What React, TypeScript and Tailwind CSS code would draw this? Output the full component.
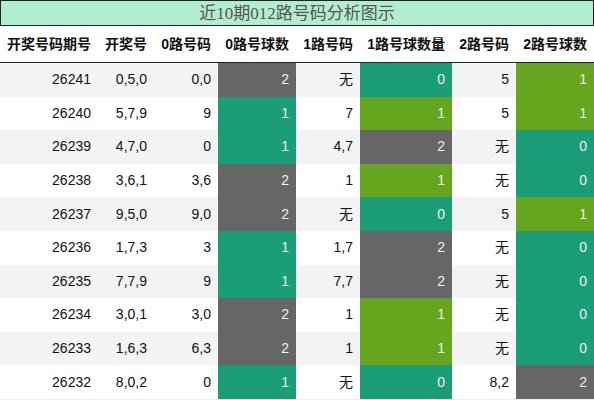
const TEAL = 'bg-[#1b9e77]';
const OLIVE = 'bg-[#66a61e]';
const GREY = 'bg-[#666666]';

type Row = {
	id: string;
	nums: string;
	r0: string;
	c0: [string, string];
	r1: string;
	c1: [string, string];
	r2: string;
	c2: [string, string];
};

// recent 10 draws, 0/1/2 route analysis
const rows: Row[] = [
	{ id: '26241', nums: '0,5,0', r0: '0,0', c0: ['2', GREY], r1: '无', c1: ['0', TEAL], r2: '5', c2: ['1', OLIVE] },
	{ id: '26240', nums: '5,7,9', r0: '9', c0: ['1', TEAL], r1: '7', c1: ['1', OLIVE], r2: '5', c2: ['1', OLIVE] },
	{ id: '26239', nums: '4,7,0', r0: '0', c0: ['1', TEAL], r1: '4,7', c1: ['2', GREY], r2: '无', c2: ['0', TEAL] },
	{ id: '26238', nums: '3,6,1', r0: '3,6', c0: ['2', GREY], r1: '1', c1: ['1', OLIVE], r2: '无', c2: ['0', TEAL] },
	{ id: '26237', nums: '9,5,0', r0: '9,0', c0: ['2', GREY], r1: '无', c1: ['0', TEAL], r2: '5', c2: ['1', OLIVE] },
	{ id: '26236', nums: '1,7,3', r0: '3', c0: ['1', TEAL], r1: '1,7', c1: ['2', GREY], r2: '无', c2: ['0', TEAL] },
	{ id: '26235', nums: '7,7,9', r0: '9', c0: ['1', TEAL], r1: '7,7', c1: ['2', GREY], r2: '无', c2: ['0', TEAL] },
	{ id: '26234', nums: '3,0,1', r0: '3,0', c0: ['2', GREY], r1: '1', c1: ['1', OLIVE], r2: '无', c2: ['0', TEAL] },
	{ id: '26233', nums: '1,6,3', r0: '6,3', c0: ['2', GREY], r1: '1', c1: ['1', OLIVE], r2: '无', c2: ['0', TEAL] },
	{ id: '26232', nums: '8,0,2', r0: '0', c0: ['1', TEAL], r1: '无', c1: ['0', TEAL], r2: '8,2', c2: ['2', GREY] },
];

const widths = ['w-[98px]', 'w-[56px]', 'w-[64px]', 'w-[78px]', 'w-[64px]', 'w-[92px]', 'w-[64px]', 'w-[78px]'];
const heads = ['开奖号码期号', '开奖号', '0路号码', '0路号球数', '1路号码', '1路号球数量', '2路号码', '2路号球数'];

const Plain = ({ w, text }: { w: string; text: string }) => (
	<div className={`${w} shrink-0 flex items-center justify-end px-[7px]`}>{text}</div>
);

const Count = ({ w, cell }: { w: string; cell: [string, string] }) => (
	<div className={`${w} ${cell[1]} shrink-0 flex items-center justify-end px-[7px] text-[#eeeeee]`}>{cell[0]}</div>
);

export default function App() {
	return (
		<div className="w-[594px] h-[400px] overflow-hidden bg-white text-[#111] font-['Liberation_Sans','Noto_Sans_CJK_SC',sans-serif] text-[14px]">
			{/* title */}
			<div className="h-[26px] border border-[#222] bg-[#b3edcf] flex items-center justify-center text-[17px] text-[#555] font-['Liberation_Serif','Noto_Sans_CJK_SC',serif] leading-none">
				近10期012路号码分析图示
			</div>
			{/* header */}
			<div className="mt-[1px] h-[36px] flex border-b border-[#222] font-bold">
				{heads.map((h, i) => (
					<Plain key={i} w={widths[i]} text={h} />
				))}
			</div>
			{/* rows */}
			<div className="border-b border-[#eee]">
				{rows.map((r, idx) => (
					<div key={r.id} className={`h-[33.6px] flex ${idx % 2 === 0 ? 'bg-[#f3f3f3]' : 'bg-white'}`}>
						<Plain w={widths[0]} text={r.id} />
						<Plain w={widths[1]} text={r.nums} />
						<Plain w={widths[2]} text={r.r0} />
						<Count w={widths[3]} cell={r.c0} />
						<Plain w={widths[4]} text={r.r1} />
						<Count w={widths[5]} cell={r.c1} />
						<Plain w={widths[6]} text={r.r2} />
						<Count w={widths[7]} cell={r.c2} />
					</div>
				))}
			</div>
		</div>
	);
}
